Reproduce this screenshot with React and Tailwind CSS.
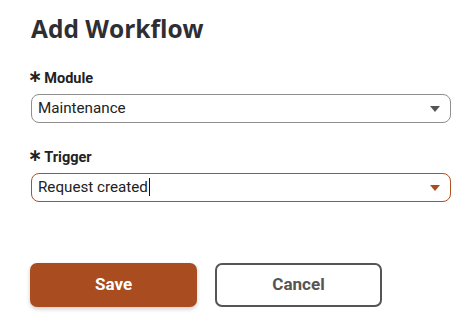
import { useState } from "react";

function Caret({ color }) {
  return (
    <svg width="10" height="6" viewBox="0 0 10 6" className="shrink-0">
      <path d="M0 0h10L5 6z" fill={color} />
    </svg>
  );
}

function SelectField({ label, value, active, cursor }) {
  return (
    <div className="flex flex-col">
      <label className="-ml-[3px] flex items-center text-[14.5px] font-bold text-[#222] leading-[18px] font-['Roboto',sans-serif]">
        <span className="mr-[2px] text-[17px] leading-none font-bold font-['DejaVu_Sans',sans-serif] -translate-y-[3px]">∗</span>
        {label}
      </label>
      <div
        className={`mt-[6px] h-[29px] flex items-center justify-between rounded-[8px] border pl-[6px] pr-[10px] ${
          active ? "border-[#b0501f]" : "border-[#8e8e8e]"
        }`}
      >
        <span className="text-[15.2px] text-[#222] font-['Roboto',sans-serif] flex items-center">
          {value}
          {cursor && <span className="ml-[1px] inline-block w-[1px] h-[18px] bg-[#111]" />}
        </span>
        <Caret color={active ? "#a94c1f" : "#555"} />
      </div>
    </div>
  );
}

export default function App() {
  const [module] = useState("Maintenance");
  const [trigger] = useState("Request created");

  return (
    <div className="w-[464px] h-[335px] bg-white pl-[31px] pr-[13px] pt-[13px]">
      <h1 className="text-[24.5px] font-bold text-[#2e2e33] leading-[32px] font-['Open_Sans',sans-serif]">
        Add Workflow
      </h1>

      <div className="mt-[25px] flex flex-col gap-[26px]">
        <SelectField label="Module" value={module} />
        <SelectField label="Trigger" value={trigger} active cursor />
      </div>

      <div className="mt-[61px] flex gap-[18px] -ml-[1px]">
        <button className="w-[167px] h-[44px] rounded-[7px] bg-[#a94c1f] text-white text-[17px] font-bold shadow-[0_2px_4px_rgba(0,0,0,0.2)] font-['Roboto',sans-serif]">
          Save
        </button>
        <button className="w-[167px] h-[44px] rounded-[7px] border-2 border-[#555] text-[#555] text-[17px] font-bold bg-white font-['Roboto',sans-serif]">
          Cancel
        </button>
      </div>
    </div>
  );
}
